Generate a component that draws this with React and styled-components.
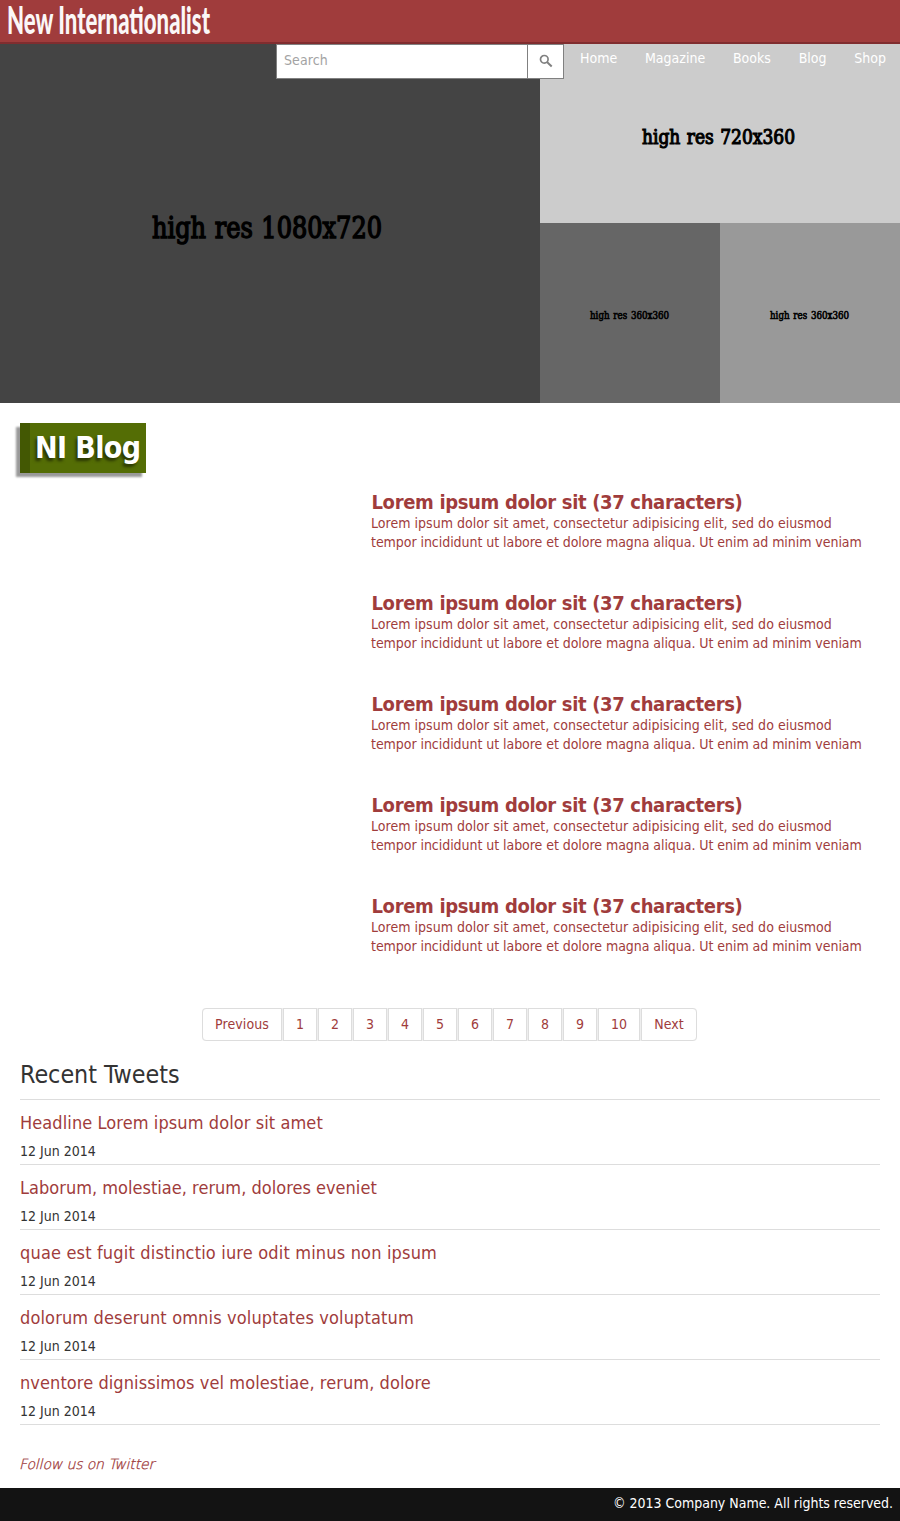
import React from "react";
import styled, { createGlobalStyle } from "styled-components";

const Global = createGlobalStyle`
  * { box-sizing: border-box; }
  body {
    margin: 0;
    background: #fff;
    color: #333;
    font: 14px/19px "DejaVu Sans Condensed", "DejaVu Sans", sans-serif;
    font-stretch: condensed;
  }
  h1, h2, h3, p, ul { margin: 0; padding: 0; }
  ul { list-style: none; }
  a { color: #a03c3c; text-decoration: none; }
`;

const Page = styled.div`
  position: relative;
  width: 900px;
  height: 1521px;
  display: flex;
  flex-direction: column;
`;

const Header = styled.header`
  position: relative;
  z-index: 1;
  flex: none;
  height: 44px;
  background: #a03c3c;
  border-bottom: 2px solid #802d2f;
`;

const Logo = styled.svg`
  display: block;
  width: 100%;
  height: 42px;
  overflow: visible;
  fill: #fbf7f7;
  font: 900 38px Lato, sans-serif;
`;

const Toolbar = styled.div`
  position: absolute;
  z-index: 2;
  top: 44px;
  right: 0;
  display: flex;
`;

const SearchForm = styled.form`
  display: flex;
  width: 288px;
  height: 35px;
  border: 1px solid #808080;
  background: #fff;
`;

const SearchInput = styled.input`
  flex: 1;
  min-width: 0;
  border: 0;
  padding: 0 7px 2px;
  background: none;
  font: inherit;
  letter-spacing: 0.1px;
  &::placeholder { color: #a3a3a3; opacity: 1; }
`;

const SearchButton = styled.button`
  width: 36px;
  border: 0;
  border-left: 1px solid #808080;
  padding: 0 0 1px;
  background: #fff;
  display: flex;
  align-items: center;
  justify-content: center;
`;

const Nav = styled.nav`
  display: flex;
  justify-content: space-between;
  width: 336px;
  padding: 5px 14px 0 16px;
  a { color: #fff; }
`;

const Hero = styled.section`
  flex: none;
  display: grid;
  grid-template: 180px 180px / 540px 180px 180px;
  margin-top: -1px;
`;

const areas = {
  main: "1 / 1 / 3 / 2",
  wide: "1 / 2 / 2 / 4",
  left: "2 / 2 / 3 / 3",
  right: "2 / 3 / 3 / 4",
};

const Tile = styled.svg`
  display: block;
  width: 100%;
  height: 100%;
  grid-area: ${(p) => areas[p.$area]};
  background: ${(p) => p.$tone};
  font-family: "DejaVu Serif Condensed", "DejaVu Serif", serif;
  font-stretch: condensed;
  word-spacing: 0.08em;
  stroke: #000;
`;

const Blog = styled.main`
  flex: none;
  height: 605px;
  padding: 20px 20px 0;
`;

const Badge = styled.h1`
  width: 126px;
  height: 50px;
  padding-left: 5px;
  border-left: 10px solid #435803;
  background: #546d05;
  box-shadow: -4px 4px 2px rgba(0, 0, 0, 0.4);
  color: #fff;
  font-size: 30px;
  letter-spacing: -0.6px;
  line-height: 49px;
  text-shadow: -2px 3px 3px rgba(0, 0, 0, 0.5);
  white-space: nowrap;
`;

const Posts = styled.ul`
  padding: 18px 0 0 351px;
`;

const Post = styled.li`
  height: 101px;
  color: #a03c3c;
  white-space: nowrap;
`;

const PostTitle = styled.h2`
  padding-left: 0.5px;
  font-size: 20px;
  letter-spacing: -0.34px;
  line-height: 23px;
`;

const PostLine = styled.p`
  letter-spacing: ${(p) => p.$tracking}px;
`;

const Pagination = styled.ul`
  flex: none;
  display: flex;
  gap: 1px;
  width: 495px;
  height: 33px;
  margin-left: 202px;
  border-radius: 4px;
  background: #eee;
`;

const PageItem = styled.li`
  width: ${(p) => p.$width}px;
  border: 1px solid #ddd;
  background: #fff;
  letter-spacing: 0.1px;
  line-height: 31px;
  text-align: center;
  &:first-child { border-radius: 4px 0 0 4px; }
  &:last-child { border-radius: 0 4px 4px 0; }
`;

const Tweets = styled.section`
  flex: 1;
  padding: 14px 20px 0;
`;

const TweetsTitle = styled.h2`
  height: 45px;
  border-bottom: 1px solid #ddd;
  font-size: 24.8px;
  font-weight: normal;
  line-height: 40px;
`;

const Tweet = styled.li`
  height: 65px;
  padding-top: 11px;
  border-bottom: 1px solid #ddd;
`;

const TweetTitle = styled.h3`
  height: 31px;
  font-size: 18px;
  font-weight: normal;
  letter-spacing: ${(p) => p.$tracking}px;
  line-height: 23px;
`;

const Follow = styled.a`
  display: inline-block;
  margin: 30px 0 0 -1px;
  font-family: "DejaVu Sans Light", "DejaVu Sans", sans-serif;
  font-weight: 200;
  font-style: italic;
  font-stretch: normal;
  letter-spacing: -0.13px;
  -webkit-text-stroke: 0.3px #a03c3c;
`;

const Footer = styled.footer`
  flex: none;
  height: 33px;
  padding: 6px 7px 0;
  background: #131313;
  color: #fff;
  letter-spacing: -0.02px;
  text-align: right;
`;

const tiles = [
  { area: "main", tone: "#444", label: "high res 1080x720", x: 152, y: 195, size: 30, stroke: 1.4, len: 230 },
  { area: "wide", tone: "#ccc", label: "high res 720x360", x: 102, y: 101, size: 21, stroke: 1.1, len: 153 },
  { area: "left", tone: "#666", label: "high res 360x360", x: 50, y: 96, size: 10.5, stroke: 0.6, len: 79 },
  { area: "right", tone: "#999", label: "high res 360x360", x: 50, y: 96, size: 10.5, stroke: 0.6, len: 79 },
];

const tweets = [
  ["Headline Lorem ipsum dolor sit amet", 0.09],
  ["Laborum, molestiae, rerum, dolores eveniet", 0.02],
  ["quae est fugit distinctio iure odit minus non ipsum", 0.17],
  ["dolorum deserunt omnis voluptates voluptatum", 0.14],
  ["nventore dignissimos vel molestiae, rerum, dolore", 0.08],
];

const pages = ["Previous", 1, 2, 3, 4, 5, 6, 7, 8, 9, 10, "Next"];
const pageWidths = { Previous: 80, 10: 42, Next: 56 };

export default function App() {
  return (
    <Page>
      <Global />
      <Header>
        <Logo>
          <text x="7" y="34" textLength="203" lengthAdjust="spacingAndGlyphs">New Internationalist</text>
        </Logo>
      </Header>
      <Toolbar>
        <SearchForm>
          <SearchInput placeholder="Search" />
          <SearchButton type="button" aria-label="Search">
            <svg width="14" height="14" viewBox="0 0 14 14" fill="none" stroke="#808080">
              <circle cx="5.3" cy="5.3" r="3.8" strokeWidth="1.7" />
              <path d="M8 8l4.7 4.5" strokeWidth="2" />
            </svg>
          </SearchButton>
        </SearchForm>
        <Nav>
          {["Home", "Magazine", "Books", "Blog", "Shop"].map((n) => (
            <a key={n} href="#">{n}</a>
          ))}
        </Nav>
      </Toolbar>
      <Hero>
        {tiles.map((t) => (
          <Tile key={t.area} $area={t.area} $tone={t.tone}>
            <text
              x={t.x}
              y={t.y}
              fontSize={t.size}
              strokeWidth={t.stroke}
              textLength={t.len}
              lengthAdjust="spacingAndGlyphs"
            >
              {t.label}
            </text>
          </Tile>
        ))}
      </Hero>
      <Blog>
        <Badge>NI Blog</Badge>
        <Posts>
          {[1, 2, 3, 4, 5].map((n) => (
            <Post key={n}>
              <PostTitle>Lorem ipsum dolor sit (37 characters)</PostTitle>
              <PostLine $tracking={0.03}>
                Lorem ipsum dolor sit amet, consectetur adipisicing elit, sed do eiusmod
              </PostLine>
              <PostLine $tracking={-0.05}>
                tempor incididunt ut labore et dolore magna aliqua. Ut enim ad minim veniam
              </PostLine>
            </Post>
          ))}
        </Posts>
      </Blog>
      <Pagination>
        {pages.map((p) => (
          <PageItem key={p} $width={pageWidths[p] || 34}>
            <a href="#">{p}</a>
          </PageItem>
        ))}
      </Pagination>
      <Tweets>
        <TweetsTitle>Recent Tweets</TweetsTitle>
        <ul>
          {tweets.map(([title, tracking]) => (
            <Tweet key={title}>
              <TweetTitle $tracking={tracking}>
                <a href="#">{title}</a>
              </TweetTitle>
              <p>12 Jun 2014</p>
            </Tweet>
          ))}
        </ul>
        <Follow href="#">Follow us on Twitter</Follow>
      </Tweets>
      <Footer>© 2013 Company Name. All rights reserved.</Footer>
    </Page>
  );
}
